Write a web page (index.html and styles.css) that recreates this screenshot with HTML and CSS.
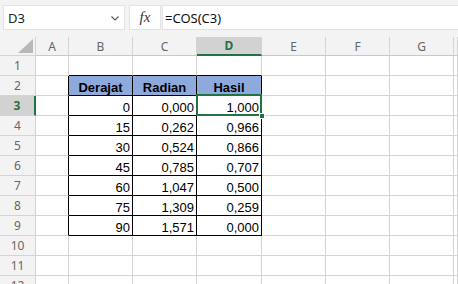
FILE: index.html
```html
<!DOCTYPE html>
<html>
	<head>
		<title>COS</title>
		<link rel="stylesheet" href="styles.css">
	</head>
	<body>
		<div class="bar">
			<div class="namebox">
				<span>D3</span>
				<svg class="chev" width="8" height="5" viewBox="0 0 8 5"><polyline points="0.5,0.5 4,4 7.5,0.5" fill="none" stroke="#555" stroke-width="1.1"/></svg>
			</div>
			<div class="fxbox"><i>fx</i></div>
			<div class="formula">=COS(C3)</div>
		</div>

		<div class="sheet">
			<div class="c corner"><span class="tri"></span></div>
			<div class="c ch">A</div>
			<div class="c ch">B</div>
			<div class="c ch">C</div>
			<div class="c ch cur">D</div>
			<div class="c ch">E</div>
			<div class="c ch">F</div>
			<div class="c ch">G</div>
			<div class="c ch"></div>

			<div class="c rh">1</div>
			<div class="c"></div>
			<div class="c bt"></div>
			<div class="c bt"></div>
			<div class="c bt"></div>
			<div class="c"></div>
			<div class="c"></div>
			<div class="c"></div>
			<div class="c"></div>

			<div class="c rh">2</div>
			<div class="c bl"></div>
			<div class="c tb th">Derajat</div>
			<div class="c tb th">Radian</div>
			<div class="c tb th">Hasil</div>
			<div class="c"></div>
			<div class="c"></div>
			<div class="c"></div>
			<div class="c"></div>

			<div class="c rh cur">3</div>
			<div class="c bl"></div>
			<div class="c tb num">0</div>
			<div class="c tb num">0,000</div>
			<div class="c tb num">1,000</div>
			<div class="c"></div>
			<div class="c"></div>
			<div class="c"></div>
			<div class="c"></div>

			<div class="c rh">4</div>
			<div class="c bl"></div>
			<div class="c tb num">15</div>
			<div class="c tb num">0,262</div>
			<div class="c tb num">0,966</div>
			<div class="c"></div>
			<div class="c"></div>
			<div class="c"></div>
			<div class="c"></div>

			<div class="c rh">5</div>
			<div class="c bl"></div>
			<div class="c tb num">30</div>
			<div class="c tb num">0,524</div>
			<div class="c tb num">0,866</div>
			<div class="c"></div>
			<div class="c"></div>
			<div class="c"></div>
			<div class="c"></div>

			<div class="c rh">6</div>
			<div class="c bl"></div>
			<div class="c tb num">45</div>
			<div class="c tb num">0,785</div>
			<div class="c tb num">0,707</div>
			<div class="c"></div>
			<div class="c"></div>
			<div class="c"></div>
			<div class="c"></div>

			<div class="c rh">7</div>
			<div class="c bl"></div>
			<div class="c tb num">60</div>
			<div class="c tb num">1,047</div>
			<div class="c tb num">0,500</div>
			<div class="c"></div>
			<div class="c"></div>
			<div class="c"></div>
			<div class="c"></div>

			<div class="c rh">8</div>
			<div class="c bl"></div>
			<div class="c tb num">75</div>
			<div class="c tb num">1,309</div>
			<div class="c tb num">0,259</div>
			<div class="c"></div>
			<div class="c"></div>
			<div class="c"></div>
			<div class="c"></div>

			<div class="c rh">9</div>
			<div class="c bl"></div>
			<div class="c tb num">90</div>
			<div class="c tb num">1,571</div>
			<div class="c tb num">0,000</div>
			<div class="c"></div>
			<div class="c"></div>
			<div class="c"></div>
			<div class="c"></div>

			<div class="c rh">10</div>
			<div class="c"></div>
			<div class="c"></div>
			<div class="c"></div>
			<div class="c"></div>
			<div class="c"></div>
			<div class="c"></div>
			<div class="c"></div>
			<div class="c"></div>

			<div class="c rh">11</div>
			<div class="c"></div>
			<div class="c"></div>
			<div class="c"></div>
			<div class="c"></div>
			<div class="c"></div>
			<div class="c"></div>
			<div class="c"></div>
			<div class="c"></div>

			<div class="c rh">12</div>
			<div class="c"></div>
			<div class="c"></div>
			<div class="c"></div>
			<div class="c"></div>
			<div class="c"></div>
			<div class="c"></div>
			<div class="c"></div>
			<div class="c"></div>

			<div class="selbox"></div>
			<div class="handle"></div>
		</div>
	</body>
</html>
```

FILE: styles.css
```css
html, body {
	margin: 0;
	padding: 0;
	background: #fff;
	overflow: hidden;
}
body {
	font-family: "Noto Sans", "Open Sans", sans-serif;
}

/* formula bar */
.bar {
	display: flex;
	height: 37px;
	box-sizing: border-box;
	padding: 5px 0 0 3px;
	background: #f3f3f3;
}
.namebox, .fxbox, .formula {
	height: 25px;
	box-sizing: border-box;
	background: #fff;
	border: 1px solid #e3e3e3;
	display: flex;
	align-items: center;
}
.namebox {
	width: 122px;
	padding-left: 4px;
	font-size: 13px;
	color: #222;
	justify-content: space-between;
	padding-right: 5px;
}
.chev {
	margin-top: 1px;
}
.fxbox {
	width: 32px;
	margin-left: 4px;
	justify-content: center;
	font-family: "Liberation Serif", "DejaVu Serif", serif;
	font-size: 15px;
	color: #333;
}
.formula {
	flex: 1;
	margin-left: 1px;
	padding-left: 2px;
	font-size: 13px;
	color: #111;
	border-right: none;
}

/* grid */
.sheet {
	position: relative;
	display: grid;
	grid-template-columns: 36px 33px 64px 64px 65px 64px 64px 64px 1fr;
	grid-template-rows: 19px repeat(12, 20px);
	background: #fff;
}
.c {
	box-sizing: border-box;
	border-right: 1px solid #d4d4d4;
	border-bottom: 1px solid #d4d4d4;
	font-family: "Liberation Sans", Arial, sans-serif;
	font-size: 13px;
	line-height: 15px;
	color: #000;
	display: flex;
	align-items: flex-end;
	overflow: hidden;
	white-space: nowrap;
}
.ch, .rh, .corner {
	background: #f3f3f3;
	font-family: "Noto Sans", "Open Sans", sans-serif;
	font-size: 12px;
	color: #666;
	align-items: center;
	justify-content: center;
	border-color: #d4d4d4;
}
.ch {
	border-bottom-color: #c8c8c8;
}
.ch.cur {
	background: #d2d2d2;
	color: #217346;
	font-weight: bold;
	border-bottom: 2px solid #217346;
}
.rh.cur {
	background: #d2d2d2;
	color: #217346;
	font-weight: bold;
	border-right: 2px solid #217346;
}
.corner {
	position: relative;
}
.tri {
	position: absolute;
	right: 2px;
	bottom: 2px;
	width: 0;
	height: 0;
	border-left: 15px solid transparent;
	border-bottom: 14px solid #b8b8b8;
}

/* table B2:D9 */
.tb {
	border-right-color: #000;
	border-bottom-color: #000;
}
.bt {
	border-bottom-color: #000;
}
.bl {
	border-right-color: #000;
}
.th {
	background: #8ea9db;
	font-weight: bold;
	justify-content: center;
}
.num {
	justify-content: flex-end;
	padding-right: 2px;
}

/* active cell */
.selbox {
	position: absolute;
	left: 196px;
	top: 57px;
	width: 66px;
	height: 22px;
	box-sizing: border-box;
	border: 2px solid #217346;
}
.handle {
	position: absolute;
	left: 259px;
	top: 76px;
	width: 6px;
	height: 6px;
	box-sizing: border-box;
	background: #217346;
	border: 1px solid #fff;
}
```
